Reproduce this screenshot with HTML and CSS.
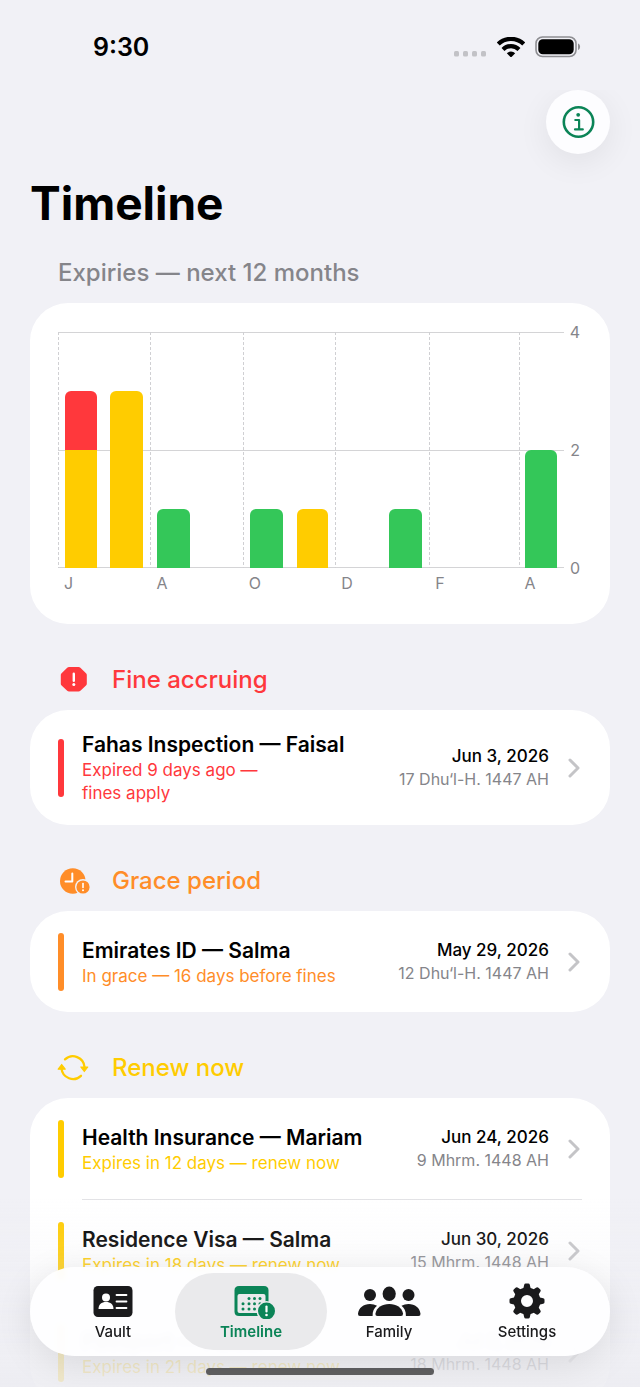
FILE: index.html
```html
<!DOCTYPE html>
<html lang="en">
<head>
  <meta charset="UTF-8">
  <meta name="viewport" content="width=device-width, initial-scale=1.0">
  <title>Timeline</title>
  <link rel="stylesheet" href="styles.css">
</head>
<body>
  <div class="status-bar">
    <span class="time">9:30</span>
    <div class="status-icons">
      <svg class="signal" width="32" height="6" viewBox="0 0 32 6" fill="#c2c2c6">
        <rect width="5" height="5.5" rx="1.5"/><rect x="9" width="5" height="5.5" rx="1.5"/>
        <rect x="18" width="5" height="5.5" rx="1.5"/><rect x="27" width="5" height="5.5" rx="1.5"/>
      </svg>
      <svg class="wifi" width="28" height="20" viewBox="0 0 28 20" fill="none" stroke="#000" stroke-width="4.2">
        <path d="M1.3 7a18.2 18.2 0 0 1 25.4 0"/>
        <path d="M6 12.400a11.500 11.500 0 0 1 16 0"/>
        <path d="M14 20.500l-4.200-4.200a6 6 0 0 1 8.400 0z" fill="#000" stroke="none"/>
      </svg>
      <svg class="battery" width="46" height="22" viewBox="0 0 46 22">
        <rect x="1" y="1" width="40" height="19.500" rx="6.500" fill="none" stroke="#8e8e92" stroke-width="1.600"/>
        <rect x="3.300" y="3.300" width="35.400" height="14.900" rx="4.500"/>
        <path d="M43 7.500c2.800 1 2.800 5.500 0 6.500z" fill="#8e8e92"/>
      </svg>
    </div>
  </div>

  <main>
    <div class="toolbar">
      <button class="info-button" aria-label="Info">
        <svg width="34" height="34" viewBox="0 0 34 34" fill="none" stroke="#0b8457" stroke-width="2.600">
          <circle cx="17.500" cy="17" r="14.700"/>
          <circle cx="17.200" cy="9.800" r="1.900" fill="#0b8457" stroke="none"/>
          <path d="M14.300 15h3.800v9.200M14 24.400h7.800" stroke-width="2.200" stroke-linecap="round" stroke-linejoin="round"/>
        </svg>
      </button>
    </div>

    <h1>Timeline</h1>

    <h2 class="chart-title">Expiries — next 12 months</h2>
    <section class="card chart">
      <div class="plot">
        <div class="month tick"><div class="bar red" style="height: 25%"></div><div class="bar yellow" style="height: 50%"></div></div>
        <div class="month"><div class="bar yellow" style="height: 75%"></div></div>
        <div class="month tick"><div class="bar green" style="height: 25%"></div></div>
        <div class="month"></div>
        <div class="month tick"><div class="bar green" style="height: 25%"></div></div>
        <div class="month"><div class="bar yellow" style="height: 25%"></div></div>
        <div class="month tick"></div>
        <div class="month"><div class="bar green" style="height: 25%"></div></div>
        <div class="month tick"></div>
        <div class="month"></div>
        <div class="month tick"><div class="bar green" style="height: 50%"></div></div>
      </div>
      <div class="y-axis"><span>4</span><span>2</span><span>0</span></div>
      <div class="x-axis">
        <span>J</span><span></span><span>A</span><span></span><span>O</span><span></span><span>D</span><span></span><span>F</span><span></span><span>A</span>
      </div>
    </section>

    <h2 class="section-title text-red">
      <svg width="32" height="30" viewBox="0 0 32 30">
        <path d="M11 2h9.600q1 0 1.800.8l5.600 5.400q.8.8.8 1.800v8.800q0 1-.8 1.800l-5.600 5.200q-.8.8-1.800.8H11q-1 0-1.800-.8l-5.600-5.200q-.8-.8-.8-1.800V10q0-1 .8-1.800l5.600-5.400Q10 2 11 2z" fill="#ff383c"/>
        <path d="M15.800 8.700v7" stroke="#fff" stroke-width="2.400" stroke-linecap="round"/>
        <circle cx="15.800" cy="19.500" r="1.500" fill="#fff"/>
      </svg>
      Fine accruing
    </h2>
    <section class="card">
      <a href="#fahas" class="row">
        <span class="marker red"></span>
        <span class="details">
          <span class="name">Fahas Inspection — Faisal</span>
          <span class="status text-red">Expired 9 days ago —<br>fines apply</span>
        </span>
        <span class="dates">
          <span class="date">Jun 3, 2026</span>
          <span class="hijri">17 Dhu‘l-H. 1447 AH</span>
        </span>
        <svg class="chevron" width="12" height="20" viewBox="0 0 12 20"><path d="M2 2l8 8-8 8"/></svg>
      </a>
    </section>

    <h2 class="section-title text-orange">
      <svg width="32" height="30" viewBox="0 0 32 30">
        <circle cx="14.800" cy="15" r="12.800" fill="#ff8d28"/>
        <path d="M14.300 7.500v8H7.500" fill="none" stroke="#fff" stroke-width="2" stroke-linecap="round" stroke-linejoin="round"/>
        <circle cx="25" cy="21" r="8" fill="#f1f1f6"/>
        <circle cx="25" cy="21" r="6.600" fill="#ff8d28"/>
        <path d="M25 17.500v4" stroke="#fff" stroke-width="1.600" stroke-linecap="round"/>
        <circle cx="25" cy="24.300" r="1" fill="#fff"/>
      </svg>
      Grace period
    </h2>
    <section class="card">
      <a href="#emirates-id" class="row">
        <span class="marker orange"></span>
        <span class="details">
          <span class="name">Emirates ID — Salma</span>
          <span class="status text-orange">In grace — 16 days before fines</span>
        </span>
        <span class="dates">
          <span class="date">May 29, 2026</span>
          <span class="hijri">12 Dhu‘l-H. 1447 AH</span>
        </span>
        <svg class="chevron" width="12" height="20" viewBox="0 0 12 20"><path d="M2 2l8 8-8 8"/></svg>
      </a>
    </section>

    <h2 class="section-title text-yellow">
      <svg width="32" height="30" viewBox="0 0 32 30" fill="none" stroke="#ffcc00" stroke-width="2.300" stroke-linecap="round">
        <path d="M7 6.400A11.600 11.600 0 0 1 26.500 14"/>
        <path d="M23 22.800A11.600 11.600 0 0 1 3.500 15.500"/>
        <path d="M22.800 14h7l-3.500 4.500z" fill="#ffcc00" stroke-width="1.200" stroke-linejoin="round"/>
        <path d="M.2 16.200h7l-3.500-4.700z" fill="#ffcc00" stroke-width="1.200" stroke-linejoin="round"/>
      </svg>
      Renew now
    </h2>
    <section class="card">
      <a href="#health-insurance" class="row">
        <span class="marker yellow"></span>
        <span class="details">
          <span class="name">Health Insurance — Mariam</span>
          <span class="status text-yellow">Expires in 12 days — renew now</span>
        </span>
        <span class="dates">
          <span class="date">Jun 24, 2026</span>
          <span class="hijri">9 Mhrm. 1448 AH</span>
        </span>
        <svg class="chevron" width="12" height="20" viewBox="0 0 12 20"><path d="M2 2l8 8-8 8"/></svg>
      </a>
      <hr>
      <a href="#residence-visa" class="row">
        <span class="marker yellow"></span>
        <span class="details">
          <span class="name">Residence Visa — Salma</span>
          <span class="status text-yellow">Expires in 18 days — renew now</span>
        </span>
        <span class="dates">
          <span class="date">Jun 30, 2026</span>
          <span class="hijri">15 Mhrm. 1448 AH</span>
        </span>
        <svg class="chevron" width="12" height="20" viewBox="0 0 12 20"><path d="M2 2l8 8-8 8"/></svg>
      </a>
      <hr>
      <a href="#passport" class="row">
        <span class="marker yellow"></span>
        <span class="details">
          <span class="name">Passport — Faisal</span>
          <span class="status text-yellow">Expires in 21 days — renew now</span>
        </span>
        <span class="dates">
          <span class="date">Jul 3, 2026</span>
          <span class="hijri">18 Mhrm. 1448 AH</span>
        </span>
        <svg class="chevron" width="12" height="20" viewBox="0 0 12 20"><path d="M2 2l8 8-8 8"/></svg>
      </a>
    </section>
  </main>

  <div class="bottom">
    <nav class="tab-bar">
      <button class="tab">
        <svg width="40" height="36" viewBox="0 0 40 36">
          <rect x=".5" y="3" width="39" height="31" rx="4.500" fill="#1a1a1c"/>
          <circle cx="13" cy="14.500" r="4" fill="#fff"/>
          <path d="M5.500 26c0-4.500 3-7 7.500-7s7.500 2.500 7.500 7z" fill="#fff"/>
          <path d="M23.500 12h10M23.500 18.500h10M23.500 25h10" stroke="#fff" stroke-width="1.800" stroke-linecap="round"/>
        </svg>
        Vault
      </button>
      <button class="tab active">
        <svg width="50" height="36" viewBox="-8 0 50 36" fill="#0b8457">
          <path d="M5 3h25q4.500 0 4.500 4.500v21q0 4.500-4.500 4.500H5Q.5 33 .5 28.500v-21Q.5 3 5 3z"/>
          <path d="M3.500 13q0-2 2-2h24q2 0 2 2v15q0 2-2 2h-24q-2 0-2-2z" fill="#eaeaec"/>
          <circle cx="15" cy="15.500" r="1.500"/><circle cx="20.500" cy="15.500" r="1.500"/><circle cx="26" cy="15.500" r="1.500"/>
          <circle cx="9" cy="20.700" r="1.500"/><circle cx="15" cy="20.700" r="1.500"/><circle cx="20.500" cy="20.700" r="1.500"/><circle cx="26" cy="20.700" r="1.500"/>
          <circle cx="9" cy="26" r="1.500"/><circle cx="15" cy="26" r="1.500"/><circle cx="20.500" cy="26" r="1.500"/>
          <circle cx="32.500" cy="28" r="10" fill="#eaeaec"/>
          <circle cx="32.500" cy="28" r="8.500"/>
          <path d="M32.500 23.500v5" stroke="#fff" stroke-width="2.200" stroke-linecap="round"/>
          <circle cx="32.500" cy="32" r="1.300" fill="#fff"/>
        </svg>
        Timeline
      </button>
      <button class="tab">
        <svg width="64" height="36" viewBox="0 0 64 36" fill="#1a1a1c">
          <circle cx="13" cy="12" r="6"/>
          <circle cx="51.500" cy="12" r="6"/>
          <path d="M3 33q-2.200 0-2-2.200C1.600 24.800 6.500 21 13 21q4 0 7 1.800c-3 2.300-4.600 5.500-4.400 10.200z"/>
          <path d="M61.500 33q2.200 0 2-2.200C62.900 24.800 58 21 51.500 21q-4 0-7 1.800c3 2.300 4.600 5.500 4.400 10.200z"/>
          <ellipse cx="32.200" cy="10.800" rx="6.600" ry="7.200"/>
          <path d="M20.500 33q-2.300 0-2-2.500C19.400 24.700 25 21 32.300 21S45 24.700 46 30.500q.2 2.500-2 2.500z"/>
        </svg>
        Family
      </button>
      <button class="tab">
        <svg width="36" height="36" viewBox="0 0 36 36" fill="#1a1a1c">
          <circle cx="18" cy="18" r="9.700" fill="none" stroke="#1a1a1c" stroke-width="7.400"/>
          <g id="teeth">
            <path d="M14.200 6l1-4.200q.3-1.300 1.500-1.300h2.600q1.200 0 1.500 1.300l1 4.200zM14.200 30l1 4.200q.3 1.300 1.500 1.300h2.600q1.200 0 1.500-1.300l1-4.200z"/>
            <path d="M6 14.200l-4.200 1Q.5 15.500.5 16.700v2.600q0 1.200 1.300 1.500l4.200 1zM30 14.200l4.200 1q1.300.3 1.300 1.500v2.600q0 1.200-1.300 1.500l-4.200 1z"/>
          </g>
          <use href="#teeth" transform="rotate(45 18 18)"/>
        </svg>
        Settings
      </button>
    </nav>
    <div class="home-indicator"></div>
  </div>
</body>
</html>
```
FILE: styles.css
```css
* {
  box-sizing: border-box;
}
body {
  margin: 0;
  height: 100vh;
  display: flex;
  flex-direction: column;
  overflow: hidden;
  background: #f1f1f6;
  color: #000;
  font-family: Inter, "Liberation Sans", sans-serif;
}
h1, h2 {
  margin: 0;
}
button {
  border: 0;
  padding: 0;
  font-family: inherit;
  cursor: pointer;
}

/* status bar */
.status-bar {
  flex: none;
  display: flex;
  justify-content: space-between;
  align-items: center;
  padding: 30px 59px 26px 93px;
}
.time {
  font-size: 25px;
  line-height: 34px;
  font-weight: 600;
}
.status-icons {
  display: flex;
  align-items: center;
}
.signal {
  margin-top: 14px;
}
.wifi {
  margin-left: 11px;
}
.battery {
  margin-left: 10px;
}

main {
  flex: 1;
  min-height: 0;
  overflow-y: auto;
  scrollbar-width: none;
  padding: 0 30px;
}
.toolbar {
  display: flex;
  justify-content: flex-end;
}
.info-button {
  display: flex;
  align-items: center;
  justify-content: center;
  width: 64px;
  height: 64px;
  border-radius: 50%;
  background: #fdfdff;
  box-shadow: 0 8px 32px rgba(0, 0, 0, 0.07);
}
h1 {
  margin-top: 20px;
  font-size: 46px;
  line-height: 58px;
  font-weight: 700;
}
.chart-title,
.section-title {
  font-size: 24px;
  line-height: 30px;
  font-weight: 500;
}
.chart-title {
  padding: 26px 28px 15px;
  color: #85858a;
}
.section-title {
  display: flex;
  align-items: center;
  gap: 22px;
  padding: 41px 28px 15px;
}
.section-title svg {
  overflow: visible;
}

.card {
  background: #fff;
  border-radius: 38px;
}

/* chart */
.chart {
  display: grid;
  grid-template-columns: 1fr 18px;
  grid-template-rows: 236px auto;
  padding: 29px 28px 30px;
  color: #85858a;
  font-size: 16px;
  line-height: 20px;
}
/* one column per month, as wide as its number of days */
.plot,
.x-axis {
  display: grid;
  grid-template-columns: 30fr 31fr 31fr 30fr 31fr 30fr 31fr 31fr 28fr 31fr 30fr;
}
.plot {
  background:
    linear-gradient(#d4d4d6, #d4d4d6) 0 0 / 100% 1px no-repeat,
    linear-gradient(#d4d4d6, #d4d4d6) 0 50% / 100% 1px no-repeat,
    linear-gradient(#d4d4d6, #d4d4d6) 0 100% / 100% 1px no-repeat;
}
.month {
  display: flex;
  flex-direction: column;
  justify-content: flex-end;
  align-items: center;
}
.tick {
  background: repeating-linear-gradient(#d0d0d3 0 3px, transparent 3px 5px) 0 0 / 1px 100% no-repeat;
}
.bar {
  width: 70%;
}
.bar:first-child {
  border-radius: 6px 6px 0 0;
}
.y-axis {
  display: flex;
  flex-direction: column;
  justify-content: space-between;
  align-items: flex-end;
  margin: -10px 0;
  padding-right: 2px;
}
.x-axis {
  padding-top: 5px;
  height: 26px;
}
.x-axis span {
  padding-left: 6px;
}

.red { background: #ff383c; }
.orange { background: #ff8d28; }
.yellow { background: #ffcc00; }
.green { background: #34c759; }
.text-red { color: #ff383c; }
.text-orange { color: #ff8d28; }
.text-yellow { color: #ffcc00; }

/* expiry rows */
.row {
  display: flex;
  align-items: center;
  min-height: 101px;
  padding: 20px 30px 20px 28px;
  color: #000;
  text-decoration: none;
}
.marker {
  flex: none;
  width: 6px;
  height: 58px;
  margin-right: 18px;
  border-radius: 3px;
}
.details,
.dates {
  display: flex;
  flex-direction: column;
}
.details {
  flex: 1;
}
.name {
  font-size: 21px;
  line-height: 29px;
  font-weight: 600;
}
.status {
  font-size: 17px;
  line-height: 23px;
}
.dates {
  text-align: right;
  white-space: nowrap;
}
.date {
  font-size: 17px;
  line-height: 23px;
  font-weight: 500;
}
.hijri {
  color: #85858a;
  font-size: 16px;
  line-height: 22px;
}
.chevron {
  flex: none;
  margin-left: 19px;
  fill: none;
  stroke: #c4c4c7;
  stroke-width: 3;
  stroke-linecap: round;
  stroke-linejoin: round;
}
hr {
  height: 1px;
  margin: 0 28px 0 52px;
  border: 0;
  background: #e3e3e6;
}

/* tab bar, floats over the list */
.bottom {
  position: fixed;
  left: 0;
  right: 0;
  bottom: 0;
  padding: 70px 30px 12px;
  background: linear-gradient(rgba(238, 238, 243, 0), rgba(238, 238, 243, 0.15) 30%, rgba(238, 238, 243, 0.8) 82%, rgba(236, 236, 241, 0.85));
}
.tab-bar {
  display: grid;
  grid-template-columns: repeat(4, 1fr);
  padding: 6px 14px;
  border-radius: 45px;
  background: rgba(254, 254, 255, 0.95);
  backdrop-filter: blur(3px);
  box-shadow: 0 8px 36px rgba(0, 0, 0, 0.1);
}
.tab {
  display: flex;
  flex-direction: column;
  align-items: center;
  gap: 4px;
  height: 77px;
  margin: 0 -7px;
  padding-top: 10px;
  border-radius: 39px;
  background: none;
  color: #1a1a1c;
  font-size: 15px;
  line-height: 18px;
  font-weight: 500;
}
.active {
  background: #eaeaec;
  color: #0b8457;
  font-weight: 600;
}
.home-indicator {
  width: 228px;
  height: 7px;
  margin: 12px auto 0;
  border-radius: 4px;
  background: #5f5f61;
}
```
